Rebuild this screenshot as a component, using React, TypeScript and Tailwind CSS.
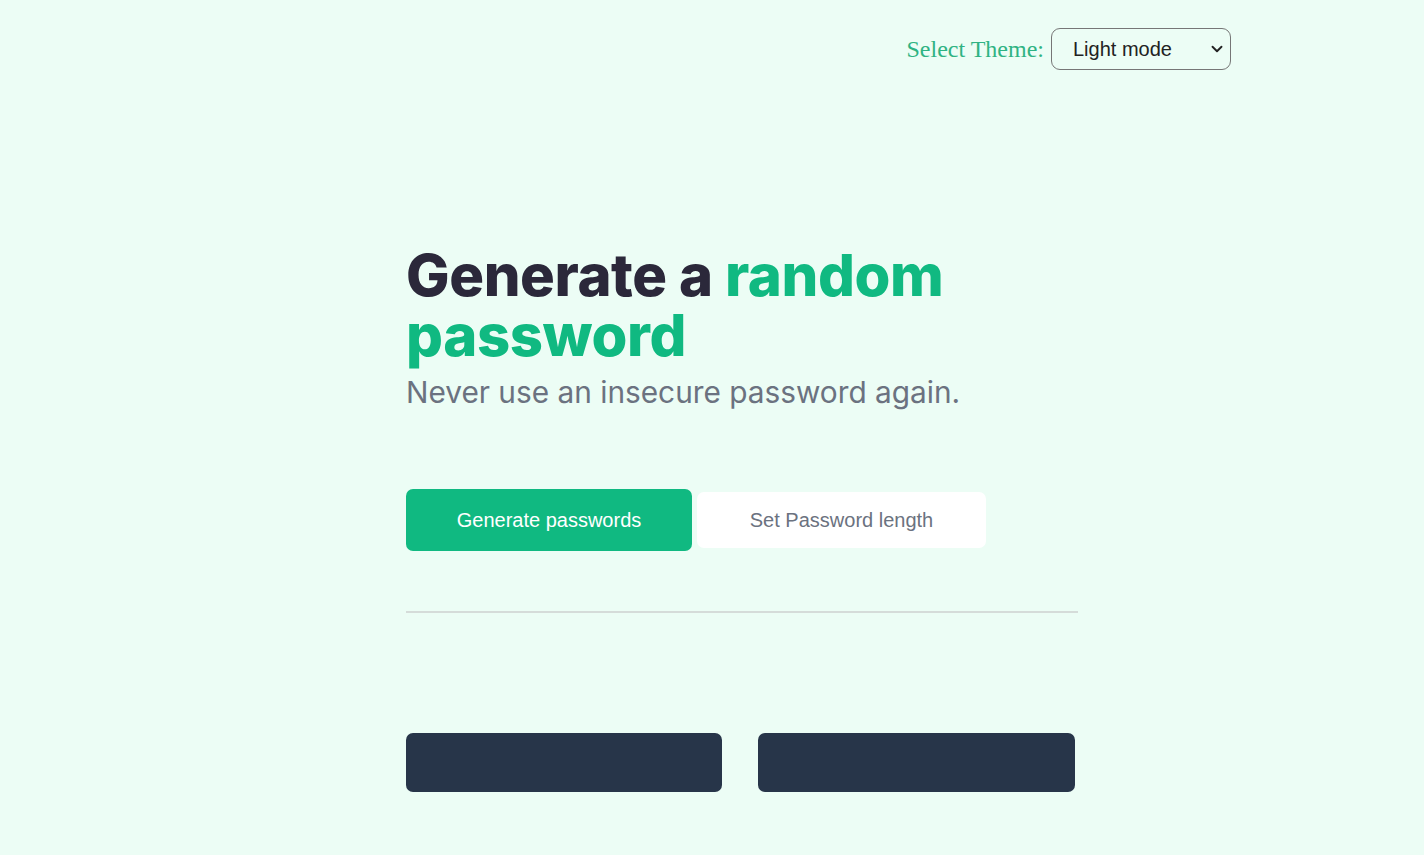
import { ChevronDown } from "lucide-react";

export default function App() {
  return (
    <div className="min-h-[855px] w-full bg-[#ecfdf5]">
      <header className="flex items-center justify-end gap-[7px] pr-[193px] pt-[28px]">
        <label className="text-[24px] text-[#2fb383] [font-family:'Liberation_Serif',serif]">
          Select Theme:
        </label>
        <div className="relative flex h-[42px] w-[180px] items-center rounded-[9px] border border-[#767676] bg-[#ecfdf5] pl-[21px] text-[20px] text-[#222] [font-family:'Liberation_Sans',Arial,sans-serif]">
          Light mode
          <ChevronDown size={18} strokeWidth={2.5} className="absolute right-[4px] top-[11px] text-[#222]" />
        </div>
      </header>

      <main className="w-[672px] ml-[406px] pt-[175px] [font-family:Inter,sans-serif]">
        <h1 className="text-[58px] font-extrabold leading-[60px] tracking-[-0.4px] text-[#2b283a]">
          Generate a <span className="text-[#10b981]">random password</span>
        </h1>
        <p className="mt-[9px] text-[29.8px] leading-[36px] text-[#6b7280]">
          Never use an insecure password again.
        </p>

        <div className="mt-[79px] flex items-center gap-[5px] [font-family:'Liberation_Sans',Arial,sans-serif]">
          <button className="h-[62px] w-[286px] rounded-[7px] bg-[#10b981] text-[20px] text-white">
            Generate passwords
          </button>
          <button className="h-[56px] w-[289px] rounded-[7px] bg-white text-[20px] text-[#6b7280]">
            Set Password length
          </button>
        </div>

        <div className="mt-[60px] h-[2px] w-[672px] bg-[#d5dcd9]" />

        <div className="mt-[120px] flex gap-[36px]">
          <div className="h-[59px] w-[316px] rounded-[7px] bg-[#273549]" />
          <div className="h-[59px] w-[317px] rounded-[7px] bg-[#273549]" />
        </div>
      </main>
    </div>
  );
}
